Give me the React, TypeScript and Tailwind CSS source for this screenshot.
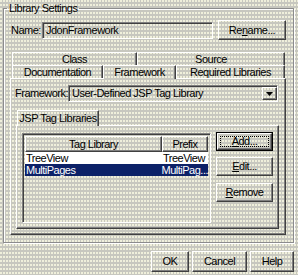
const dither =
  "bg-[#c7c7bf] bg-[radial-gradient(circle_at_1px_1px,#f1f1dc_0.7px,transparent_0.9px)] bg-[length:3px_4px] bg-fixed";

const raised =
  "border border-t-white border-l-white border-r-[#404040] border-b-[#404040] shadow-[inset_-1px_-1px_0_#808080]";

const sunken =
  "border border-t-[#808080] border-l-[#808080] border-r-white border-b-white shadow-[inset_1px_1px_0_#404040]";

const tab =
  "flex items-center justify-center border-t border-l border-r border-t-white border-l-white border-r-[#404040] shadow-[inset_-1px_0_0_#808080]";

const panel =
  "border border-t-white border-l-white border-r-[#404040] border-b-[#404040] shadow-[inset_-1px_-1px_0_#808080]";

function Button({
  children,
  className = "",
  isDefault = false,
}: {
  children: React.ReactNode;
  className?: string;
  isDefault?: boolean;
}) {
  if (isDefault) {
    return (
      <button
        type="button"
        className={`border border-black p-0 ${className}`}
      >
        <div className={`flex h-full w-full items-center justify-center p-[2px] ${raised}`}>
          <div className="flex h-full w-full items-center justify-center border border-dotted border-black">
            {children}
          </div>
        </div>
      </button>
    );
  }
  return (
    <button
      type="button"
      className={`flex items-center justify-center ${raised} ${className}`}
    >
      {children}
    </button>
  );
}

export default function App() {
  return (
    <div
      className={`h-[275px] w-[298px] overflow-hidden whitespace-nowrap ${dither} font-['Liberation_Sans',Arial,sans-serif] text-[11px] leading-[13px] tracking-[-0.5px] text-black`}
    >
      <fieldset className="ml-[3px] mt-[2px] h-[241px] w-[291px] border border-[#8c8c8c] shadow-[inset_1px_1px_0_#ffffff,1px_1px_0_#ffffff]">
        <legend className="ml-[3px] px-[2px]">Library Settings</legend>

        {/* name row */}
        <div className="mt-[5px] flex h-[20px] items-center">
          <span className="ml-[7px] w-[31px] shrink-0">Name:</span>
          <div className={`flex h-[17px] w-[171px] shrink-0 items-center pl-[3px] ${sunken}`}>
            JdonFramework
          </div>
          <Button className="ml-[5px] h-[20px] w-[68px] shrink-0">
            Re<u>n</u>ame...
          </Button>
        </div>

        {/* tab control */}
        <div className="ml-[6px] mt-[12px] w-[276px]">
          <div className="flex h-[13px] pl-[2px]">
            <div className={`w-[125px] ${tab}`}>Class</div>
            <div className={`w-[148px] ${tab}`}>Source</div>
          </div>
          <div className="flex h-[13px] pl-[2px]">
            <div className={`w-[91px] ${tab}`}>Documentation</div>
            <div className={`relative z-10 -mb-[1px] h-[14px] w-[73px] ${dither} ${tab}`}>
              Framework
            </div>
            <div className={`w-[109px] ${tab}`}>Required Libraries</div>
          </div>

          <div className={`h-[157px] ${panel}`}>
            <div className="mt-[6px] flex h-[17px] items-center">
              <span className="ml-[4px] w-[53px] shrink-0">Framework:</span>
              <div className={`flex h-[17px] w-[210px] shrink-0 items-center pl-[3px] ${sunken}`}>
                <span>User-Defined JSP Tag Library</span>
                <div className={`ml-auto flex h-[13px] w-[15px] items-center justify-center ${raised}`}>
                  <svg width="7" height="4" viewBox="0 0 7 4">
                    <path d="M0 0h7L3.5 4z" fill="#000" />
                  </svg>
                </div>
              </div>
            </div>

            <div className="ml-[5px] mt-[8px]">
              <div className={`relative z-10 -mb-[1px] ml-[1px] h-[16px] w-[82px] ${dither} ${tab}`}>
                JSP Tag Libraries
              </div>
              <div className={`flex h-[104px] w-[263px] ${panel}`}>
                {/* list view */}
                <div className={`ml-[5px] mt-[7px] h-[90px] w-[189px] p-[2px] ${sunken}`}>
                  <div className="flex h-[16px]">
                    <div className={`flex w-[137px] items-center justify-center ${raised}`}>
                      Tag Library
                    </div>
                    <div className={`flex flex-1 items-center justify-center ${raised}`}>
                      Prefix
                    </div>
                  </div>
                  <div className="flex h-[12px] bg-white leading-[12px]">
                    <span className="w-[137px] pl-[1px]">TreeView</span>
                    <span className="flex-1 pl-[1px]">TreeView</span>
                  </div>
                  <div className="flex h-[12px] bg-[#0c2168] leading-[12px] text-white">
                    <span className="w-[137px] pl-[1px]">MultiPages</span>
                    <span className="flex-1 pl-[1px]">MultiPag...</span>
                  </div>
                </div>

                {/* buttons */}
                <div className="ml-[5px] mt-[6px] flex w-[57px] flex-col">
                  <Button isDefault className="h-[19px] w-[57px]">
                    <span>
                      <u>A</u>dd...
                    </span>
                  </Button>
                  <Button className="mt-[6px] h-[19px] w-[57px]">
                    <u>E</u>dit...
                  </Button>
                  <Button className="mt-[7px] h-[19px] w-[57px]">
                    <u>R</u>emove
                  </Button>
                </div>
              </div>
            </div>
          </div>
        </div>
      </fieldset>

      <div className="mt-[8px] flex justify-end gap-[3px] pr-[4px]">
        <Button className="h-[21px] w-[38px]">OK</Button>
        <Button className="h-[21px] w-[55px]">Cancel</Button>
        <Button className="h-[21px] w-[44px]">Help</Button>
      </div>
    </div>
  );
}
